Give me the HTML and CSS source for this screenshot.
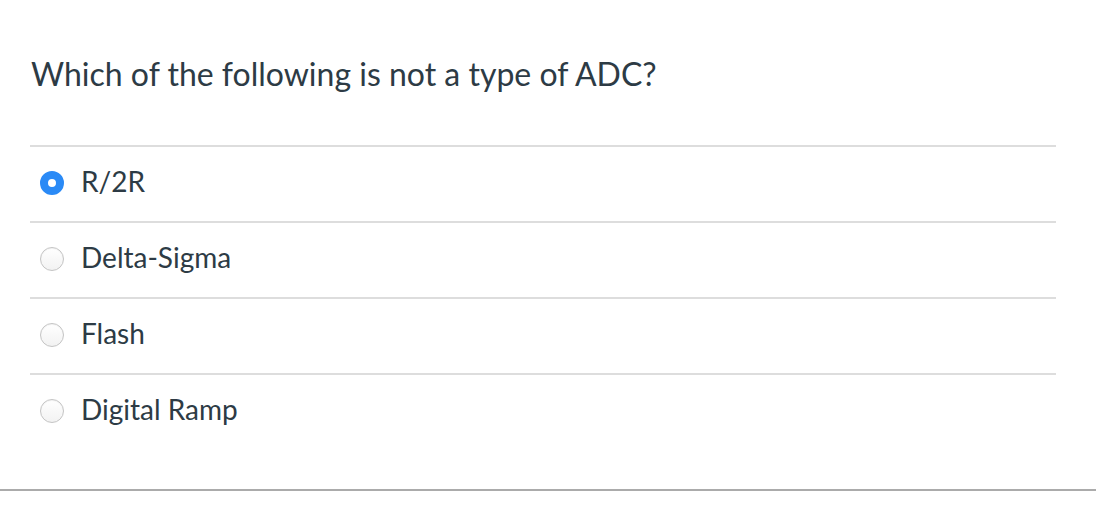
FILE: index.html
```html
<!DOCTYPE html>
<html lang="en">
<head>
    <meta charset="UTF-8">
    <title>Quiz Question</title>
    <link rel="stylesheet" href="styles.css">
</head>
<body>
    <div class="question">
        <div class="question-text">Which of the following is not a type of ADC?</div>
        <div class="answers">
            <label class="answer">
                <span class="radio checked"></span>
                <span class="answer-label">R/2R</span>
            </label>
            <label class="answer">
                <span class="radio"></span>
                <span class="answer-label">Delta-Sigma</span>
            </label>
            <label class="answer">
                <span class="radio"></span>
                <span class="answer-label">Flash</span>
            </label>
            <label class="answer">
                <span class="radio"></span>
                <span class="answer-label">Digital Ramp</span>
            </label>
        </div>
    </div>
    <hr class="divider">
</body>
</html>
```

FILE: styles.css
```css
body { margin: 0; font-family: Lato, "Open Sans", Arial, sans-serif; color: #2d3b45; background: #fff; }
.question { padding: 55px 40px 0 30px; }
.question-text { font-size: 32px; line-height: 38px; padding-left: 1px; margin-bottom: 52px; }
.answers { display: flex; flex-direction: column; }
.answer { display: flex; align-items: center; height: 74px; border-top: 2px solid #dddddd; }
.radio { box-sizing: border-box; width: 24px; height: 24px; margin-left: 10px; margin-right: 17px; margin-top: -2px; border-radius: 50%; border: 1px solid #c4c4c4; background: linear-gradient(#ffffff, #f2f2f2); box-shadow: inset 0 1px 1px rgba(0,0,0,0.05); }
.radio.checked { border: 8px solid #2a8af6; background: #fff; box-shadow: none; }
.answer-label { font-size: 28px; margin-top: -7px; }
.divider { margin: 40px 0 0; border: 0; border-top: 2px solid #ababab; }
```
